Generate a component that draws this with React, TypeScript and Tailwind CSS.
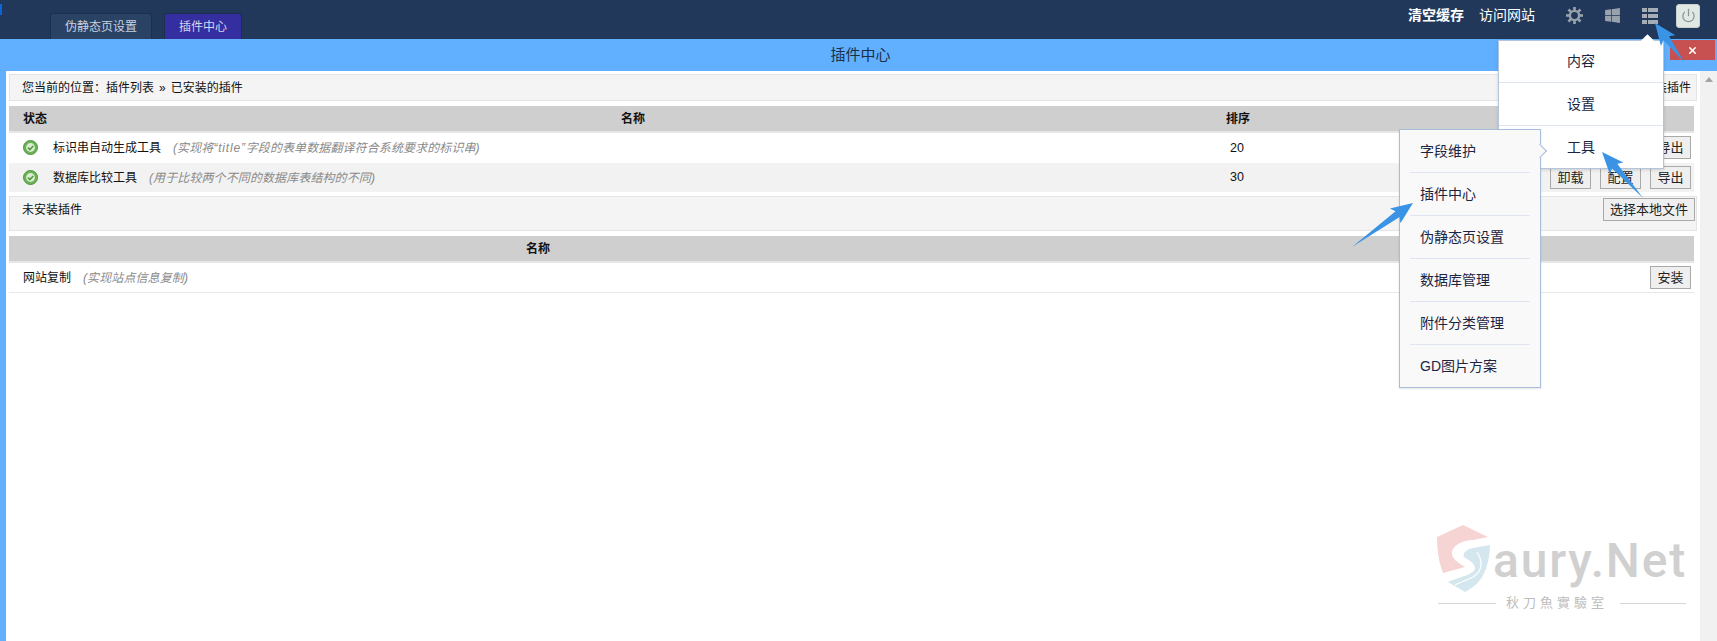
import { FaWindows } from 'react-icons/fa'
import { Power, X } from 'lucide-react'

const FONT = '"Liberation Sans", "Noto Sans CJK SC", sans-serif'

function Btn({ children, className = '' }: { children: React.ReactNode; className?: string }) {
  return (
    <button className={`h-[23px] border border-[#a9a9a9] bg-[#efefef] text-[13px] leading-none text-[#222] ${className}`}>
      {children}
    </button>
  )
}

function CheckDot() {
  return (
    <svg width="15" height="15" viewBox="0 0 15 15" className="shrink-0">
      <circle cx="7.5" cy="7.5" r="7" fill="#6cb356" stroke="#4f9440" />
      <circle cx="7.5" cy="7.5" r="4.4" fill="#dcebd6" />
      <path d="M5 7.6l1.9 1.9L10.2 6" fill="none" stroke="#4f9a3d" strokeWidth="1.6" />
    </svg>
  )
}

function Gear() {
  const teeth = [0, 45, 90, 135, 180, 225, 270, 315]
  return (
    <svg width="17" height="17" viewBox="0 0 17 17" className="ml-[31px]">
      <circle cx="8.5" cy="8.5" r="4.6" fill="none" stroke="#98a2ad" strokeWidth="2.4" />
      {teeth.map((a) => (
        <rect key={a} x="7.2" y="0" width="2.6" height="3.4" fill="#98a2ad" transform={`rotate(${a} 8.5 8.5)`} />
      ))}
    </svg>
  )
}

function Arrow({ from, to }: { from: [number, number]; to: [number, number] }) {
  const dx = to[0] - from[0]
  const dy = to[1] - from[1]
  const len = Math.hypot(dx, dy)
  const ux = dx / len
  const uy = dy / len
  const px = -uy
  const py = ux
  const at = (back: number, side: number) => `${to[0] - ux * back + px * side},${to[1] - uy * back + py * side}`
  const pts = [`${from[0]},${from[1]}`, at(19, 3.5), at(22, 9), `${to[0]},${to[1]}`, at(22, -9), at(19, -3.5)]
  return <polygon points={pts.join(' ')} fill="#3a93e4" />
}

const ROWS = [
  {
    name: '标识串自动生成工具',
    desc: <>(实现将<span className="tracking-[0.8px]">“title”</span>字段的表单数据翻译符合系统要求的标识串)</>,
    sort: 20,
    bg: 'bg-white',
  },
  { name: '数据库比较工具', desc: <>(用于比较两个不同的数据库表结构的不同)</>, sort: 30, bg: 'bg-[#f2f2f2]' },
]

const MENU = ['内容', '设置', '工具']
const SUBMENU = ['字段维护', '插件中心', '伪静态页设置', '数据库管理', '附件分类管理', 'GD图片方案']

export default function App() {
  return (
    <div className="relative h-[641px] w-[1717px] overflow-hidden bg-white" style={{ fontFamily: FONT }}>
      {/* Top bar */}
      <div className="relative flex h-[39px] items-end bg-[#21385a] pl-[50px]">
        <div className="absolute left-0 top-[4px] h-[11px] w-[2px] bg-[#0a66d8]" />
        <div className="flex gap-[12px]">
          <div className="flex h-[26px] w-[102px] items-center justify-center rounded-t-[3px] border-x border-t border-[#1b3050] bg-[#2a4263] text-[12px] text-[#c6d2e0]">伪静态页设置</div>
          <div className="flex h-[26px] w-[78px] items-center justify-center rounded-t-[3px] border-x border-t border-[#1b3050] bg-[#342ea0] text-[12px] text-[#d5d8f0]">插件中心</div>
        </div>
        <div className="ml-auto flex h-full items-center pb-[8px] pr-[17px]">
          <span className="text-[14px] font-bold text-white">清空缓存</span>
          <span className="ml-[15px] text-[14px] text-white">访问网站</span>
          <Gear />
          <FaWindows size={17} className="ml-[21px] text-[#98a2ad]" />
          <svg width="16" height="16" viewBox="0 0 16 16" className="ml-[21px]" fill="#a5adb6">
            <rect x="0" y="0" width="5" height="4" />
            <rect x="6" y="0" width="10" height="4" />
            <rect x="0" y="6" width="5" height="4" />
            <rect x="6" y="6" width="10" height="4" />
            <rect x="0" y="12" width="5" height="4" />
            <rect x="6" y="12" width="10" height="4" />
          </svg>
          <div className="ml-[18px] flex h-[24px] w-[24px] items-center justify-center rounded-[3px] border border-[#c9d2cf] bg-[#e0e8e4]">
            <Power size={15} className="text-[#8a9496]" />
          </div>
        </div>
      </div>

      {/* Window title */}
      <div className="relative flex h-[32px] items-center justify-center bg-[#60b0ff] pl-[4px] text-[15px] text-[#1d2f45]">
        插件中心
        <div className="absolute right-[2px] top-[1px] flex h-[20px] w-[45px] items-center justify-center bg-[#c75050]">
          <X size={11} strokeWidth={3.5} className="text-white" />
        </div>
      </div>

      {/* Window body */}
      <div className="flex h-[570px]">
        <div className="w-[6px] bg-[#60b0ff]" />
        <div className="w-[1694px] px-[3px] pt-[3px] text-[12px] text-[#111]">
          <div className="flex h-[27px] w-[1688px] items-center justify-between border border-[#e4e4e4] bg-[#f4f4f4] pl-[12px] pr-[5px]">
            <span>您当前的位置：插件列表<span className="mx-[5px]">»</span>已安装的插件</span>
            <span>查看未安装插件</span>
          </div>

          <div className="mt-[5px] grid h-[27px] w-[1685px] grid-cols-[38px_1172px_38px_1fr] items-center border-b-2 border-[#e6e6e6] bg-[#cfcfcf] font-bold">
            <span className="pl-[14px]">状态</span>
            <span className="text-center">名称</span>
            <span className="text-center">排序</span>
          </div>
          <div className="w-[1685px]">
            {ROWS.map((r) => (
              <div key={r.name} className={`grid h-[29.5px] grid-cols-[38px_1172px_38px_1fr] items-center ${r.bg}`}>
                <span className="pl-[14px]"><CheckDot /></span>
                <span className="flex items-center pl-[6px] pt-[1px]">
                  <span>{r.name}</span>
                  <i className="ml-[12px] tracking-[0.1px] text-[#8a8a8a]">{r.desc}</i>
                </span>
                <span className="pr-[2px] pt-[1px] text-center text-[12.5px]">{r.sort}</span>
                <span className="flex justify-end gap-[9px] pr-[3px]">
                  <Btn className="w-[41px]">卸载</Btn>
                  <Btn className="w-[41px]">配置</Btn>
                  <Btn className="w-[41px]">导出</Btn>
                </span>
              </div>
            ))}
          </div>

          <div className="mt-[4px] flex h-[35px] w-[1688px] items-start justify-between border border-[#e4e4e4] bg-[#f4f4f4] pl-[12px] pr-[1px] pt-[1px]">
            <span className="pt-[3px]">未安装插件</span>
            <Btn className="w-[92px]">选择本地文件</Btn>
          </div>

          <div className="mt-[5px] flex h-[27px] w-[1685px] items-center border-b-2 border-[#e6e6e6] bg-[#cfcfcf] pl-[517px] font-bold">名称</div>
          <div className="flex h-[30px] w-[1685px] items-center justify-between border-b border-[#e8e8e8] pl-[14px] pr-[3px]">
            <span className="flex items-center pt-[1px]">
              <span>网站复制</span>
              <i className="ml-[12px] tracking-[0.1px] text-[#8a8a8a]">(实现站点信息复制)</i>
            </span>
            <Btn className="w-[41px]">安装</Btn>
          </div>
        </div>
        <div className="flex w-[17px] justify-center bg-[#f1f1f1] pt-[6px]">
          <div className="h-0 w-0 border-x-[4px] border-b-[5px] border-x-transparent border-b-[#a3a3a3]" />
        </div>
      </div>

      {/* Main dropdown */}
      <div className="absolute left-[1498px] top-[40px] w-[166px] border border-[#b4c4dc] bg-white shadow-[0_1px_3px_rgba(0,0,0,0.15)]">
        <div className="absolute -top-[5px] left-[144px] h-[9px] w-[9px] rotate-45 bg-white" />
        {MENU.map((m, i) => (
          <div key={m} className={`flex items-center justify-center text-[14px] text-[#1c2440] ${i === 1 ? 'h-[43px]' : 'h-[42px]'} ${i < 2 ? 'border-b border-[#dfe5f0]' : ''}`}>{m}</div>
        ))}
      </div>

      {/* Sub menu */}
      <div className="absolute left-[1399px] top-[129px] w-[142px] border border-[#a9bcd9] bg-[#f9f9fa] px-[10px] shadow-[0_1px_2px_rgba(0,0,0,0.1)]">
        <div className="absolute -right-[5px] top-[16px] h-[10px] w-[10px] rotate-45 border-r border-t border-[#a9bcd9] bg-[#f9f9fa]" />
        {SUBMENU.map((m, i) => (
          <div key={m} className={`flex items-center pl-[10px] text-[14px] text-[#1c2440] ${i < 5 ? 'h-[43px] border-b border-[#dfe5f2]' : 'h-[42px]'}`}>{m}</div>
        ))}
      </div>

      {/* Watermark */}
      <div className="absolute left-[1437px] top-[525px] h-[100px] w-[260px]">
        <svg width="55" height="70" viewBox="0 0 55 70" className="absolute left-0 top-0">
          <path d="M26 0L0 12C0 25 2 38 6 48L28 42C22 38 14 34 15 27C16 20 26 15 36 15L51 12Z" fill="#f7d4d4" />
          <path d="M53 20L36 23C30 24 25 28 27 32C33 36 38 38 38 44C36 50 22 52 11 57L28 67C42 60 52 48 53 20Z" fill="#d4e6ee" />
          <path d="M40 27C46 36 46 46 36 52C30 55 24 57 18 60" fill="none" stroke="#ffffff" strokeWidth="1.2" />
        </svg>
        <span className="absolute left-[56px] top-[12px] text-[48px] font-medium leading-none tracking-[1.8px] text-[#d0d0d0]" style={{ fontFamily: 'Roboto, sans-serif' }}>aury.Net</span>
        <div className="absolute left-[1px] top-[78px] h-px w-[58px] bg-[#d5d5d5]" />
        <span className="absolute left-[69px] top-[70px] text-[13px] leading-none tracking-[4px] text-[#bdbdbd]" style={{ fontFamily: '"Noto Sans CJK TC", serif' }}>秋刀魚實驗室</span>
        <div className="absolute left-[183px] top-[78px] h-px w-[66px] bg-[#d5d5d5]" />
      </div>

      {/* Annotation arrows */}
      <svg width="1717" height="641" className="pointer-events-none absolute left-0 top-0">
        <Arrow from={[1684, 62]} to={[1655, 23]} />
        <Arrow from={[1643, 198]} to={[1602, 152]} />
        <Arrow from={[1352, 247]} to={[1413, 203]} />
      </svg>
    </div>
  )
}
